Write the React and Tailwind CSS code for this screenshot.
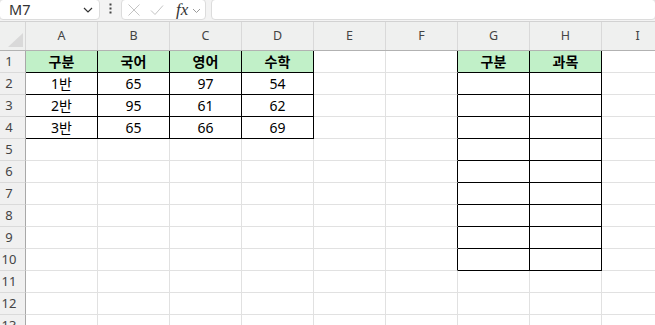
import React from 'react';

// sheet contents, row 1..13, columns A..I
const COLS = ['A', 'B', 'C', 'D', 'E', 'F', 'G', 'H', 'I'];
const ROWS = [
  ['구분', '국어', '영어', '수학', '', '', '구분', '과목', ''],
  ['1반', '65', '97', '54', '', '', '', '', ''],
  ['2반', '95', '61', '62', '', '', '', '', ''],
  ['3반', '65', '66', '69', '', '', '', '', ''],
];
const ROW_COUNT = 13;

const inBox = (r, c) =>
  (r >= 1 && r <= 4 && c >= 0 && c <= 3) || (r >= 1 && r <= 10 && c >= 6 && c <= 7);

const font = { fontFamily: '"Noto Sans", "Noto Sans CJK KR", sans-serif' };

const FormulaBar = () => (
  <div className="flex h-[21px] items-start bg-[#f3f3f3]">
    {/* Name box */}
    <div className="flex h-[21px] w-[101px] -mt-px -ml-px items-center justify-between rounded-[4px] border border-[#dcdcdc] bg-white pl-[9px] pr-[6px]">
      <span className="text-[14.5px] leading-none text-[#333]">M7</span>
      <svg width="10" height="6" viewBox="0 0 10 6" fill="none" className="mt-[1px]">
        <path d="M1 1l4 4 4-4" stroke="#333" strokeWidth="1.2" />
      </svg>
    </div>
    <div className="flex w-[21px] justify-center pt-[3px]">
      <svg width="3" height="12" viewBox="0 0 3 12">
        <rect x="0.5" y="0.5" width="2" height="2" fill="#444" />
        <rect x="0.5" y="4.5" width="2" height="2" fill="#444" />
        <rect x="0.5" y="8.5" width="2" height="2" fill="#444" />
      </svg>
    </div>
    {/* cancel / enter / fx */}
    <div className="flex h-[21px] w-[85px] -mt-px items-center rounded-[4px] border border-[#dcdcdc] bg-white pl-[5px]">
      <svg width="14" height="14" viewBox="0 0 14 14" fill="none">
        <path d="M1.5 1.5l11 11M12.5 1.5l-11 11" stroke="#c4c4c4" strokeWidth="1" />
      </svg>
      <svg width="14" height="14" viewBox="0 0 14 14" fill="none" className="ml-[9px]">
        <path d="M1 7.5l4 4L13 2.5" stroke="#c4c4c4" strokeWidth="1" />
      </svg>
      <span
        className="ml-[12px] text-[17px] italic leading-none text-[#333]"
        style={{ fontFamily: '"Liberation Serif", serif' }}
      >
        fx
      </span>
      <svg width="9" height="6" viewBox="0 0 9 6" fill="none" className="ml-[4px] mt-[2px]">
        <path d="M1 1l3.5 3.5L8 1" stroke="#9a9a9a" strokeWidth="1" />
      </svg>
    </div>
    <div className="ml-[5px] h-[21px] flex-1 -mt-px -mr-px rounded-[4px] border border-[#dcdcdc] bg-white" />
  </div>
);

const ColumnHeader = () => (
  <div className="grid h-[30px] grid-cols-[26px_repeat(9,72px)] border-y border-t-[#d2d2d2] border-b-[#b2b2b2] bg-[#eff0ef]">
    <div className="relative border-r border-[#d6d6d6]">
      <svg width="15" height="14" viewBox="0 0 15 14" className="absolute bottom-[3px] right-[2px]">
        <path d="M15 0V14H0Z" fill="#d9d9d9" />
      </svg>
    </div>
    {COLS.map((c) => (
      <div
        key={c}
        className="flex items-center justify-center border-r border-[#d9d9d9] text-[12.5px] text-[#444]"
      >
        {c}
      </div>
    ))}
  </div>
);

const Cell = ({ r, c, value }) => {
  const right = inBox(r, c) || inBox(r, c + 1);
  const bottom = inBox(r, c) || inBox(r + 1, c);
  const green = r === 1 && inBox(r, c);
  return (
    <div
      className={`flex items-center justify-center border-r border-b text-[14px] text-black ${
        right ? 'border-r-black' : 'border-r-[#e1e1e1]'
      } ${bottom ? 'border-b-black' : 'border-b-[#e1e1e1]'} ${
        green ? 'bg-[#c1f0c8] font-bold' : 'bg-white'
      }`}
    >
      {value}
    </div>
  );
};

export default function App() {
  return (
    <div className="h-[325px] w-[655px] overflow-hidden bg-white" style={font}>
      <FormulaBar />
      <ColumnHeader />
      <div className="grid grid-cols-[26px_repeat(9,72px)] auto-rows-[22px]">
        {Array.from({ length: ROW_COUNT }, (_, i) => {
          const r = i + 1;
          const values = ROWS[i] || [];
          return (
            <React.Fragment key={r}>
              <div className="flex items-center justify-center border-r border-b border-r-[#a8a8a8] border-b-[#dadada] bg-[#f0f0f0] pr-[7px] text-[13px] text-[#444]">
                {r}
              </div>
              {COLS.map((_, c) => (
                <Cell key={c} r={r} c={c} value={values[c] || ''} />
              ))}
            </React.Fragment>
          );
        })}
      </div>
    </div>
  );
}
